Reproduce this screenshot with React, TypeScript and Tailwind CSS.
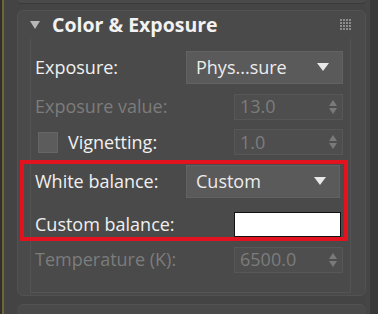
import React from "react";

const font = { fontFamily: '"Open Sans", "DejaVu Sans", sans-serif' };

function Arrow() {
    return (
        <svg width="14" height="10" viewBox="0 0 14 10" className="shrink-0">
            <path d="M1 1 H13 L7 9 Z" fill="#e8e8e8" />
        </svg>
    );
}

function Dropdown({ value, w }: { value: string; w: string }) {
    return (
        <div className={`${w} h-[33px] flex items-center justify-between pl-[9px] pr-[12px] bg-[#5a5a5a] border border-[#626262] text-[18px] text-[#ececec]`}>
            <span>{value}</span>
            <Arrow />
        </div>
    );
}

function Spinner({ value }: { value: string }) {
    return (
        <div className="w-[109px] h-[26px] flex items-center justify-between pl-[5px] pr-[4px] bg-[#4e4e4e] border border-[#575757] text-[18px] text-[#7c7c7c]">
            <span>{value}</span>
            <svg width="10" height="16" viewBox="0 0 10 16">
                <path d="M1 7 L5 1 L9 7 Z" fill="#7a7a7a" />
                <path d="M1 9 L5 15 L9 9 Z" fill="#7a7a7a" />
            </svg>
        </div>
    );
}

function GridIcon() {
    const cells = [0, 3, 6, 9];
    return (
        <svg width="13" height="13" viewBox="0 0 13 13">
            {cells.map((x) =>
                cells.map((y) => <rect key={`${x}-${y}`} x={x} y={y} width="2" height="2" fill="#8c8c8c" />)
            )}
        </svg>
    );
}

export default function App() {
    return (
        <div className="w-[378px] h-[314px] overflow-hidden flex bg-[#3f3f3f]" style={font}>
            {/* left edge */}
            <div className="w-[2px] bg-[#2e2e2e]" />
            <div className="w-[2px] bg-[#6e6636]" />
            <div className="w-[13px] bg-[#444444]" />

            <div className="w-[349px] flex flex-col bg-[#444444]">
                {/* previous rollout bottom */}
                <div className="h-[4px] bg-[#4a4a4a] border-b border-[#3a3a3a] rounded-b-sm" />
                <div className="h-[6px]" />

                {/* Color & Exposure rollout */}
                <div className="relative h-[292px] flex flex-col bg-[#4a4a4a] border border-[#525252] rounded-md">
                    <div className="h-[28px] flex items-center pl-[12px] pr-[12px]">
                        <svg width="10" height="8" viewBox="0 0 10 8" className="shrink-0">
                            <path d="M0 0 H10 L5 8 Z" fill="#b8b8b8" />
                        </svg>
                        <span className="ml-[12px] text-[19.5px] font-bold text-[#f2f2f2] leading-none">Color &amp; Exposure</span>
                        <div className="ml-auto mt-[2px]">
                            <GridIcon />
                        </div>
                    </div>

                    <div className="flex-1 ml-[12px] mr-[14px] mb-[2px] border-l border-r border-b border-[#545454] flex flex-col pl-[4px] pr-[7px] pt-[12px] text-[18px]">
                        <div className="h-[33px] flex items-center justify-between">
                            <span className="text-[#f0f0f0]">Exposure:</span>
                            <Dropdown value="Phys...sure" w="w-[157px]" />
                        </div>
                        <div className="h-[26px] mt-[10px] flex items-center justify-between">
                            <span className="text-[#7c7c7c]">Exposure value:</span>
                            <Spinner value="13.0" />
                        </div>
                        <div className="h-[25px] mt-[10px] flex items-center justify-between">
                            <div className="flex items-center">
                                <div className="w-[20px] h-[21px] ml-[3px] bg-[#5c5c5c] border border-[#666666]" />
                                <span className="ml-[10px] text-[#f0f0f0]">Vignetting:</span>
                            </div>
                            <Spinner value="1.0" />
                        </div>
                        <div className="h-[33px] mt-[10px] flex items-center justify-between">
                            <span className="text-[#f0f0f0]">White balance:</span>
                            <div className="pr-[3px]">
                                <Dropdown value="Custom" w="w-[154px]" />
                            </div>
                        </div>
                        <div className="h-[25px] mt-[14px] flex items-center justify-between">
                            <span className="text-[#f0f0f0]">Custom balance:</span>
                            <div className="w-[107px] h-[25px] mr-[2px] bg-white border border-[#111111]" />
                        </div>
                        <div className="h-[26px] mt-[10px] flex items-center justify-between">
                            <span className="text-[#7c7c7c]">Temperature (K):</span>
                            <Spinner value="6500.0" />
                        </div>
                    </div>

                    {/* red highlight annotation */}
                    <div className="absolute left-[2px] top-[149px] w-[328px] h-[81px] border-4 border-[#e3121f] pointer-events-none" />
                </div>

                <div className="h-[8px]" />
                <div className="h-[10px] bg-[#4a4a4a] border-t border-[#525252] rounded-t-md" />
            </div>

            {/* right edge */}
            <div className="w-[4px] bg-[#464646]" />
            <div className="flex-1 bg-[#393939]" />
        </div>
    );
}
